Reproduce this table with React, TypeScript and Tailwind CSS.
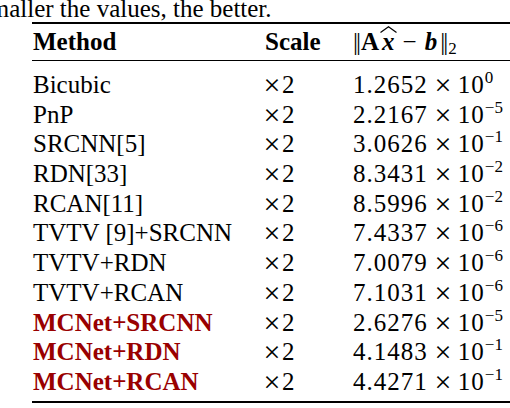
import React from "react";

type Row = {
  method: string;
  mant: string;
  exp: string;
  ours?: boolean;
};

const rows: Row[] = [
  { method: "Bicubic", mant: "1.2652", exp: "0" },
  { method: "PnP", mant: "2.2167", exp: "\u22125" },
  { method: "SRCNN[5]", mant: "3.0626", exp: "\u22121" },
  { method: "RDN[33]", mant: "8.3431", exp: "\u22122" },
  { method: "RCAN[11]", mant: "8.5996", exp: "\u22122" },
  { method: "TVTV [9]+SRCNN", mant: "7.4337", exp: "\u22126" },
  { method: "TVTV+RDN", mant: "7.0079", exp: "\u22126" },
  { method: "TVTV+RCAN", mant: "7.1031", exp: "\u22126" },
  { method: "MCNet+SRCNN", mant: "2.6276", exp: "\u22125", ours: true },
  { method: "MCNet+RDN", mant: "4.1483", exp: "\u22121", ours: true },
  { method: "MCNet+RCAN", mant: "4.4271", exp: "\u22121", ours: true },
];

const serif = "font-['Liberation_Serif',serif]";

function Norm() {
  return <span className="tracking-[-2px] mr-[2px]">||</span>;
}

function Times() {
  return <span className="inline-block scale-[1.2] font-light">{"\u00d7"}</span>;
}

function App() {
  return (
    <div className={`w-[510px] h-[408px] overflow-hidden bg-white text-black ${serif}`}>
      {/* caption fragment, cut on the left */}
      <p className="ml-[-20px] mt-[-1px] text-[25px] leading-[20px] whitespace-nowrap">
        smaller the values, the better.
      </p>

      <div className="ml-[32px] mt-[3px] border-t-[2.5px] border-b-[2.5px] border-black">
        {/* header */}
        <div className="flex h-[37px] items-center border-b border-black text-[25px] font-bold">
          <div className="w-[233px] pl-[1px]">Method</div>
          <div className="w-[88px]">Scale</div>
          <div className="flex items-baseline font-normal">
            <Norm />
            <span className="font-bold">A</span>
            <span className="relative ml-[3px] font-bold italic">
              x
              <svg
                className="absolute left-[-2px] top-[3px]"
                width="17"
                height="7"
                viewBox="0 0 17 7"
              >
                <polyline points="0.5,6.5 8.5,0.8 16.5,6.5" fill="none" stroke="black" strokeWidth="1.2" />
              </svg>
            </span>
            <span className="mx-[8px]">{"\u2212"}</span>
            <span className="font-bold italic mr-[3px]">b</span>
            <Norm />
            <span className="text-[17px] translate-y-[4px]">2</span>
          </div>
        </div>

        {/* body */}
        <div className="pt-[9px] pb-[4px] text-[25px]">
          {rows.map((r) => (
            <div key={r.method} className="flex h-[29.7px] items-center leading-[29.7px]">
              <div
                className={`w-[233px] pl-[1px] whitespace-nowrap ${
                  r.ours ? "font-bold text-[#990000]" : ""
                }`}
              >
                {r.method}
              </div>
              <div className="w-[88px] flex items-baseline gap-[3px]">
                <Times />
                <span>2</span>
              </div>
              <div className="flex items-baseline whitespace-nowrap">
                <span className="tracking-[1px]">{r.mant}</span>
                <span className="mx-[8px]">
                  <Times />
                </span>
                <span className="tracking-[1px]">10</span>
                <span className="text-[17px] relative top-[-10px] leading-none">{r.exp}</span>
              </div>
            </div>
          ))}
        </div>
      </div>
    </div>
  );
}

export default App;
